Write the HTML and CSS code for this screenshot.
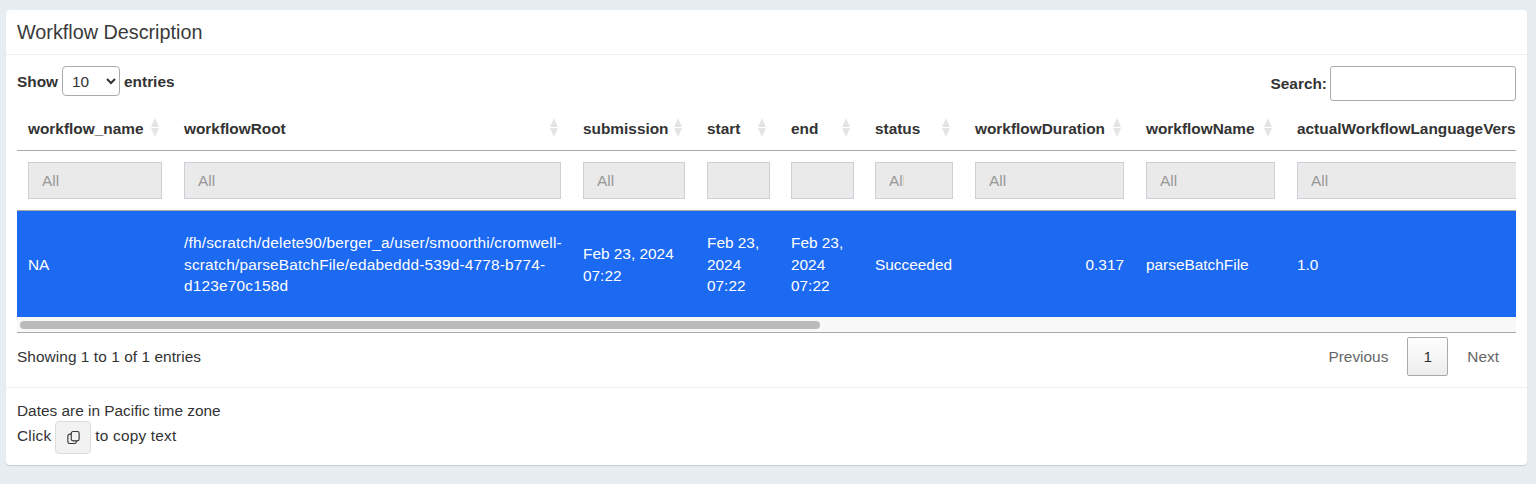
FILE: index.html
```html
<!DOCTYPE html>
<html lang="en">
<head>
  <meta charset="UTF-8">
  <title>Workflow Description</title>
  <link rel="stylesheet" href="styles.css">
</head>
<body>
<div class="card">
  <div class="card-header">Workflow Description</div>

  <div class="card-body">
    <div class="table-top">
      <label class="length">Show
        <select class="length-select"><option>10</option></select>
        entries</label>
      <label class="search">Search: <input type="search" class="search-input"></label>
    </div>

    <div class="table-scroll">
      <table class="data-table">
        <colgroup>
          <col class="col-name">
          <col class="col-root">
          <col class="col-submission">
          <col class="col-date">
          <col class="col-date">
          <col class="col-status">
          <col class="col-duration">
          <col class="col-wfname">
          <col class="col-version">
        </colgroup>
        <thead>
          <tr class="head-row">
            <th>workflow_name<span class="sort"></span></th>
            <th>workflowRoot<span class="sort"></span></th>
            <th>submission<span class="sort"></span></th>
            <th>start<span class="sort"></span></th>
            <th>end<span class="sort"></span></th>
            <th>status<span class="sort"></span></th>
            <th>workflowDuration<span class="sort"></span></th>
            <th>workflowName<span class="sort"></span></th>
            <th>actualWorkflowLanguageVersion<span class="sort"></span></th>
          </tr>
          <tr class="filter-row">
            <td><input class="filter" placeholder="All"></td>
            <td><input class="filter" placeholder="All"></td>
            <td><input class="filter" placeholder="All"></td>
            <td><input class="filter" placeholder="All"></td>
            <td><input class="filter" placeholder="All"></td>
            <td><input class="filter" placeholder="All"></td>
            <td><input class="filter" placeholder="All"></td>
            <td><input class="filter" placeholder="All"></td>
            <td><input class="filter" placeholder="All"></td>
          </tr>
        </thead>
        <tbody>
          <tr class="selected">
            <td>NA</td>
            <td class="path">/fh/scratch/delete90/berger_a/user/smoorthi/cromwell-scratch/parseBatchFile/edabeddd-539d-4778-b774-d123e70c158d</td>
            <td>Feb 23, 2024 07:22</td>
            <td>Feb 23, 2024 07:22</td>
            <td>Feb 23, 2024 07:22</td>
            <td>Succeeded</td>
            <td class="num">0.317</td>
            <td>parseBatchFile</td>
            <td>1.0</td>
          </tr>
        </tbody>
      </table>
    </div>
    <div class="scroll-track"><div class="scroll-thumb"></div></div>

    <div class="table-bottom">
      <div class="info">Showing 1 to 1 of 1 entries</div>
      <div class="paging">
        <a class="page-link">Previous</a>
        <a class="page-link current">1</a>
        <a class="page-link">Next</a>
      </div>
    </div>
  </div>

  <div class="card-footer">
    <div>Dates are in Pacific time zone</div>
    <div class="copy-line">Click
      <button class="copy-btn" type="button">
        <svg width="15" height="15" viewBox="0 0 16 16" fill="none" stroke="#333" stroke-width="1.2">
          <rect x="5.6" y="1.6" width="8.4" height="10" rx="2"/>
          <path d="M5.6 4.4H4a2 2 0 0 0-2 2v6a2 2 0 0 0 2 2h5a2 2 0 0 0 2-2v-.8"/>
        </svg>
      </button>
      to copy text</div>
  </div>
</div>
</body>
</html>
```

FILE: styles.css
```css
body {
  margin: 0;
  padding: 10px 9px 19px 6px;
  background-color: #e8edf2;
  font-family: "Liberation Sans", Arial, sans-serif;
  font-size: 15.4px;
  line-height: 1.4;
  color: #333;
}

.card {
  background-color: #fff;
  border-radius: 4px;
  box-shadow: 0 1px 1px rgba(0, 0, 0, 0.15);
}

.card-header {
  height: 45px;
  box-sizing: border-box;
  padding: 9px 11px;
  font-size: 19.8px;
  line-height: 26px;
  color: #3a3a3a;
  border-bottom: 1px solid #f0f0f0;
}

.card-body {
  padding: 11px 11px 0;
}

.table-top {
  display: flex;
  justify-content: space-between;
  height: 41px;
}

.length, .search {
  display: flex;
  align-items: center;
  align-self: flex-start;
  font-weight: bold;
}

.length {
  gap: 4px;
  height: 31px;
}

.length-select {
  align-self: flex-start;
  width: 58px;
  height: 30px;
  padding: 0 5px;
  font-family: inherit;
  font-size: 15.4px;
  color: #333;
  background-color: #fff;
  border: 1px solid #aaa;
  border-radius: 4px;
}

.search {
  gap: 3px;
  height: 35px;
}

.search-input {
  width: 186px;
  height: 35px;
  box-sizing: border-box;
  border: 1px solid #aaa;
  border-radius: 3px;
}

.table-scroll {
  overflow: hidden;
}

.data-table {
  width: 1620px;
  table-layout: fixed;
  border-collapse: separate;
  border-spacing: 0;
}

.col-name { width: 156px; }
.col-root { width: 399px; }
.col-submission { width: 124px; }
.col-date { width: 84px; }
.col-status { width: 100px; }
.col-duration { width: 171px; }
.col-wfname { width: 151px; }

.head-row th {
  position: relative;
  height: 44px;
  box-sizing: border-box;
  padding: 0 11px;
  text-align: left;
  white-space: nowrap;
  overflow: hidden;
  color: #333;
  border-bottom: 1px solid #aaa;
}

.sort {
  position: absolute;
  top: 11px;
  right: 13px;
  width: 9px;
  height: 19px;
}

.sort::before, .sort::after {
  content: "";
  position: absolute;
  left: 0;
  border-left: 4.5px solid transparent;
  border-right: 4.5px solid transparent;
}

.sort::before {
  top: 0;
  border-bottom: 9px solid #e4e4e4;
}

.sort::after {
  bottom: 0;
  border-top: 9px solid #e4e4e4;
}

.filter-row td {
  height: 60px;
  box-sizing: border-box;
  padding: 0 11px;
  border-bottom: 1px solid #aaa;
}

/* the wide right padding is what cuts "All" off in the narrow columns */
.filter {
  display: block;
  width: 100%;
  height: 37px;
  box-sizing: border-box;
  padding: 1px 48px 0 13px;
  font-family: inherit;
  font-size: 15.4px;
  background-color: #eaeaea;
  border: 1px solid #ccd0d6;
}

.filter::placeholder {
  color: #999;
}

.selected td {
  height: 106px;
  box-sizing: border-box;
  padding: 1px 11px 0;
  background-color: #1c69f2;
  color: #fff;
}

.selected .path {
  letter-spacing: 0.19px;
}

.selected .num {
  text-align: right;
}

.scroll-track {
  height: 11px;
  padding-top: 4px;
  background-color: #f8f8f8;
  border-bottom: 1px solid #aaa;
}

.scroll-thumb {
  width: 800px;
  height: 8px;
  margin-left: 3px;
  background-color: #bbb;
  border-radius: 4px;
}

.table-bottom {
  display: flex;
  justify-content: space-between;
  height: 50px;
  margin-top: 4px;
}

.info {
  padding-top: 9px;
  letter-spacing: 0.07px;
}

.paging {
  display: flex;
  align-items: flex-start;
  gap: 1px;
  margin-right: -1px;
}

.page-link {
  height: 39px;
  box-sizing: border-box;
  padding: 8px 17px;
  border: 1px solid transparent;
  color: #666;
}

.page-link.current {
  width: 41px;
  padding: 8px 0;
  text-align: center;
  color: #333;
  background: linear-gradient(#fff, #ececec);
  border-color: #aaa;
  border-radius: 2px;
}

.card-footer {
  padding: 12px 11px 11px;
  line-height: 21px;
  border-top: 1px solid #f0f0f0;
}

.copy-line {
  display: flex;
  align-items: flex-start;
  gap: 4px;
  line-height: 29px;
  letter-spacing: 0.2px;
}

.copy-btn {
  display: flex;
  align-items: center;
  justify-content: center;
  width: 36px;
  height: 33px;
  padding: 0;
  background-color: #f2f2f2;
  border: 1px solid #ddd;
  border-radius: 4px;
}
```
